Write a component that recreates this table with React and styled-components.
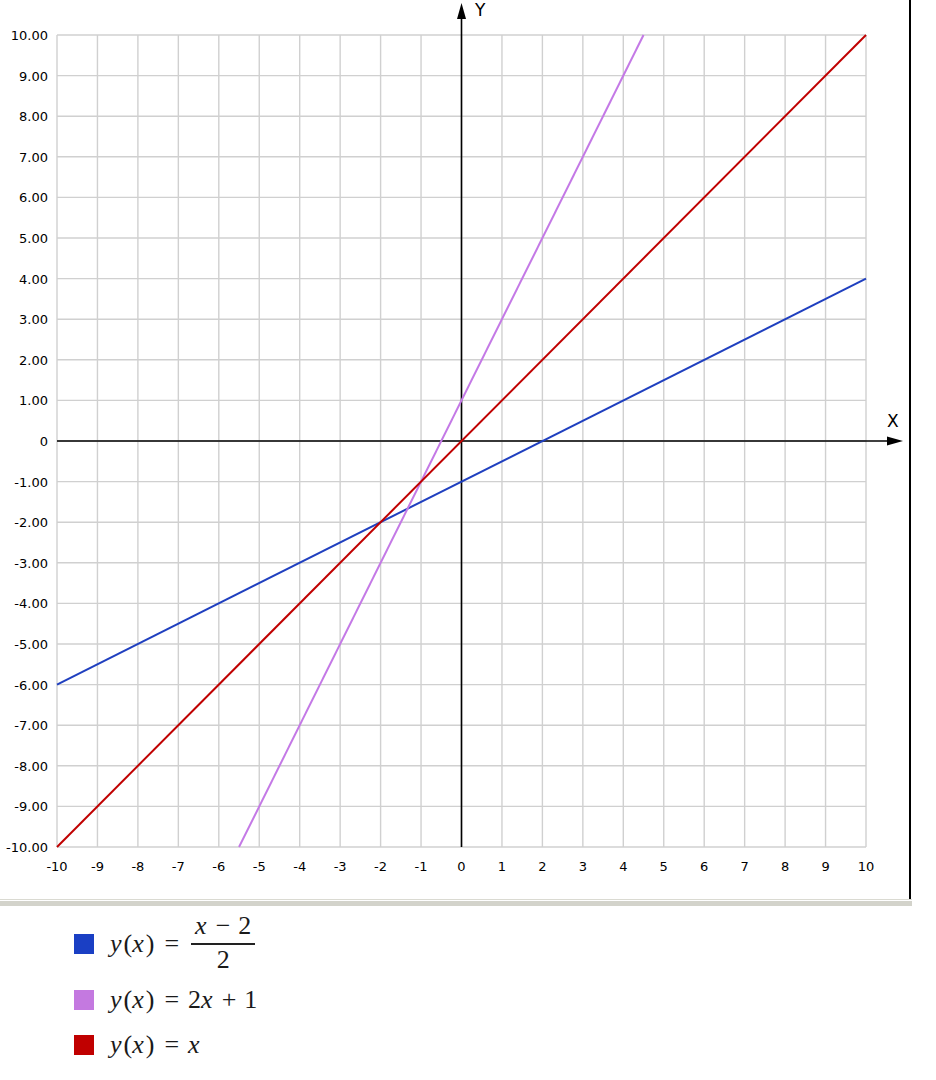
import styled, { createGlobalStyle } from "styled-components";

const GlobalStyle = createGlobalStyle`
  body {
    margin: 0;
    background: #ffffff;
    font-family: "DejaVu Sans", Verdana, sans-serif;
  }
`;

// plot area in page pixels
const LEFT = 57;
const RIGHT = 866;
const TOP = 35;
const BOTTOM = 847;
const sx = (x) => LEFT + ((x + 10) / 20) * (RIGHT - LEFT);
const sy = (y) => BOTTOM - ((y + 10) / 20) * (BOTTOM - TOP);

const ticks = Array.from({ length: 21 }, (_, i) => i - 10);

const functions = [
  { color: "#1f3fbf", from: [-10, -6], to: [10, 4] },
  { color: "#c479e6", from: [-5.5, -10], to: [4.5, 10] },
  { color: "#c00000", from: [-10, -10], to: [10, 10] },
];

function Chart() {
  return (
    <Svg width="909" height="899" viewBox="0 0 909 899">
      {ticks.map((t) => (
        <g key={"g" + t}>
          <line x1={sx(t)} y1={TOP} x2={sx(t)} y2={BOTTOM} stroke="#d0d0d0" strokeWidth="1.4" />
          <line x1={LEFT} y1={sy(t)} x2={RIGHT} y2={sy(t)} stroke="#d0d0d0" strokeWidth="1.4" />
        </g>
      ))}

      {/* axes */}
      <line x1={sx(0)} y1={BOTTOM} x2={sx(0)} y2={12} stroke="#000" strokeWidth="1.6" />
      <polygon points={`${sx(0)},3 ${sx(0) - 4.5},19 ${sx(0) + 4.5},19`} fill="#000" />
      <line x1={LEFT} y1={sy(0)} x2={893} y2={sy(0)} stroke="#000" strokeWidth="1.6" />
      <polygon points={`903,${sy(0)} 887,${sy(0) - 4.5} 887,${sy(0) + 4.5}`} fill="#000" />

      {functions.map((f, i) => (
        <line
          key={i}
          x1={sx(f.from[0])}
          y1={sy(f.from[1])}
          x2={sx(f.to[0])}
          y2={sy(f.to[1])}
          stroke={f.color}
          strokeWidth="2"
        />
      ))}

      {ticks.map((t) => (
        <AxisText key={"x" + t} x={sx(t)} y={871} textAnchor="middle">
          {t}
        </AxisText>
      ))}
      {ticks.map((t) => (
        <AxisText key={"y" + t} x={48} y={sy(t) + 5} textAnchor="end">
          {t === 0 ? "0" : t.toFixed(2)}
        </AxisText>
      ))}

      <AxisName x={475} y={16}>Y</AxisName>
      <AxisName x={887} y={427}>X</AxisName>
    </Svg>
  );
}

function Fraction({ top, bottom }) {
  return (
    <Frac>
      <Num>{top}</Num>
      <Den>{bottom}</Den>
    </Frac>
  );
}

export default function App() {
  return (
    <>
      <GlobalStyle />
      <Panel>
        <ChartBox>
          <Chart />
        </ChartBox>
        <Divider />
      </Panel>
      <Legend>
        <Item $gap="9px">
          <Swatch $color="#1a3fc4" />
          <Formula>
            <I>y</I>(<I>x</I>)<Rel>=</Rel>
            <Fraction
              top={
                <>
                  <I>x</I>
                  <Bin>−</Bin>2
                </>
              }
              bottom="2"
            />
          </Formula>
        </Item>
        <Item $gap="13px">
          <Swatch $color="#c479e0" />
          <Formula>
            <I>y</I>(<I>x</I>)<Rel>=</Rel>2<I>x</I>
            <Bin>+</Bin>1
          </Formula>
        </Item>
        <Item>
          <Swatch $color="#c00000" />
          <Formula>
            <I>y</I>(<I>x</I>)<Rel>=</Rel>
            <I>x</I>
          </Formula>
        </Item>
      </Legend>
    </>
  );
}

const Panel = styled.div`
  width: 912px;
  display: flex;
  flex-direction: column;
`;

const ChartBox = styled.div`
  width: 911px;
  height: 899px;
  box-sizing: border-box;
  border-right: 2px solid #000;
`;

const Svg = styled.svg`
  display: block;
`;

const AxisText = styled.text`
  font-family: "DejaVu Sans", Verdana, sans-serif;
  font-size: 13px;
  fill: #000;
`;

const AxisName = styled.text`
  font-family: "DejaVu Sans", Verdana, sans-serif;
  font-size: 17px;
  fill: #000;
`;

const Divider = styled.div`
  width: 912px;
  height: 7px;
  box-sizing: border-box;
  border-top: 1px solid #dadad2;
  background: linear-gradient(#ffffff 0 1px, #d3d3cb 1px 6px, #f4f4f2 6px);
`;

const Legend = styled.ul`
  list-style: none;
  margin: 0;
  padding: 7px 0 0 74px;
  display: flex;
  flex-direction: column;
`;

const Item = styled.li`
  display: flex;
  align-items: center;
  gap: 16px;
  margin-bottom: ${(p) => p.$gap || "0"};
`;

const Swatch = styled.span`
  width: 20px;
  height: 20px;
  background: ${(p) => p.$color};
  flex: none;
`;

const Formula = styled.span`
  display: inline-flex;
  align-items: center;
  font-family: "Liberation Serif", "DejaVu Serif", serif;
  font-size: 26px;
  line-height: 32px;
  color: #1a1a1a;
`;

const I = styled.i`
  font-style: italic;
  padding-right: 2px;
`;

const Rel = styled.span`
  margin: 0 9px 0 10px;
`;

const Bin = styled.span`
  margin: 0 8px 0 7px;
`;

const Frac = styled.span`
  display: inline-flex;
  flex-direction: column;
  align-items: center;
  margin-left: 3px;
`;

const Num = styled.span`
  padding: 0 4px 4px;
  border-bottom: 2px solid #222;
  line-height: 26px;
`;

const Den = styled.span`
  line-height: 30px;
`;
